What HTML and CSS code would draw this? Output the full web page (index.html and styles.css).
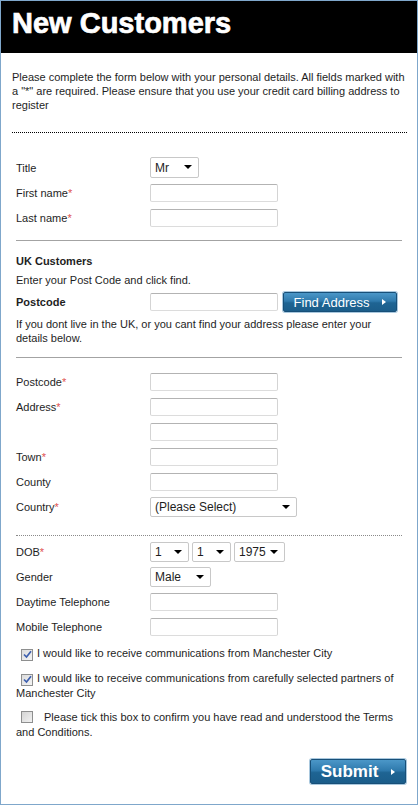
FILE: index.html
```html
<!DOCTYPE html>
<html lang="en">
<head>
<meta charset="utf-8">
<title>New Customers</title>
<link rel="stylesheet" href="styles.css">
</head>
<body>
<div class="panel">
  <header class="hd"><h1>New Customers</h1></header>
  <p class="intro">Please complete the form below with your personal details. All fields marked with a "*" are required. Please ensure that you use your credit card billing address to register</p>
  <hr class="dots">
  <form class="form" onsubmit="return false">
    <div class="rows rows-name">
      <div class="row"><label>Title</label><span class="sel w-title"><select><option>Mr</option><option>Mrs</option><option>Miss</option><option>Ms</option></select></span></div>
      <div class="row"><label>First name<span class="req">*</span></label><input class="txt" type="text"></div>
      <div class="row"><label>Last name<span class="req">*</span></label><input class="txt" type="text"></div>
    </div>
    <hr class="solid">
    <div class="uk">
      <h2>UK Customers</h2>
      <p class="note">Enter your Post Code and click find.</p>
      <div class="pc-row"><label class="bold">Postcode</label><input class="txt" type="text"><button type="button" class="btn btn-find">Find Address<i class="tri"></i></button></div>
      <p class="note note-2">If you dont live in the UK, or you cant find your address please enter your details below.</p>
    </div>
    <hr class="solid solid-2">
    <div class="rows rows-addr">
      <div class="row"><label>Postcode<span class="req">*</span></label><input class="txt" type="text"></div>
      <div class="row"><label>Address<span class="req">*</span></label><input class="txt" type="text"></div>
      <div class="row"><label></label><input class="txt" type="text"></div>
      <div class="row"><label>Town<span class="req">*</span></label><input class="txt" type="text"></div>
      <div class="row"><label>County</label><input class="txt" type="text"></div>
      <div class="row"><label>Country<span class="req">*</span></label><span class="sel w-country"><select><option>(Please Select)</option><option>United Kingdom</option></select></span></div>
    </div>
    <hr class="dots dots-light">
    <div class="rows rows-dob">
      <div class="row"><label>DOB<span class="req">*</span></label>
        <div class="dob">
          <span class="sel w-day"><select><option>1</option></select></span>
          <span class="sel w-day"><select><option>1</option></select></span>
          <span class="sel w-year"><select><option>1975</option></select></span>
        </div>
      </div>
      <div class="row"><label>Gender</label><span class="sel w-gender"><select><option>Male</option><option>Female</option></select></span></div>
      <div class="row"><label>Daytime Telephone</label><input class="txt" type="text"></div>
      <div class="row"><label>Mobile Telephone</label><input class="txt" type="text"></div>
    </div>
    <p class="cb cb-1"><span class="box"><svg viewBox="0 0 9 9" width="9" height="9"><path d="M1 4.5 L3.5 7 L8 1.2" fill="none" stroke="#3d5fae" stroke-width="1.7"/></svg></span>I would like to receive communications from Manchester City</p>
    <p class="cb cb-2"><span class="box"><svg viewBox="0 0 9 9" width="9" height="9"><path d="M1 4.5 L3.5 7 L8 1.2" fill="none" stroke="#3d5fae" stroke-width="1.7"/></svg></span>I would like to receive communications from carefully selected partners of Manchester City</p>
    <p class="cb cb-3"><span class="box box-off"></span><span class="sp"></span>Please tick this box to confirm you have read and understood the Terms and Conditions.</p>
    <div class="actions"><button type="submit" class="btn btn-submit">Submit<i class="tri"></i></button></div>
  </form>
</div>
</body>
</html>
```

FILE: styles.css
```css
* { box-sizing: border-box; }
html, body { margin: 0; padding: 0; background: #fff; }
body {
  font-family: "Liberation Sans", Arial, sans-serif;
  font-size: 11px;
  line-height: 14px;
  color: #1e1e1e;
}
.panel {
  width: 418px;
  height: 805px;
  border: 1px solid #7fa7cb;
  background: #fff;
}
.hd {
  background: #000;
  height: 52px;
  padding: 5px 0 0 11px;
}
.hd h1 {
  margin: 0;
  color: #fff;
  font-family: "Liberation Sans", Arial, sans-serif;
  font-weight: bold;
  font-size: 29px;
  line-height: 34px;
  -webkit-text-stroke: 0.7px #fff;
}
.intro {
  margin: 17px 8px 0 11px;
}
hr { border: 0; margin: 0; height: 0; }
.dots {
  border-top: 1px dotted #000;
  margin: 20px 10px 0 11px;
}
.dots-light {
  border-top-color: #8a8a8a;
  margin: 16px 15px 0 15px;
}
.solid {
  border-top: 1px solid #a3a3a3;
  margin: 10px 15px 0 15px;
}
.solid-2 { margin-top: 12px; }

.rows { padding-left: 15px; }
.rows-name { margin-top: 22px; }
.rows-addr { margin-top: 11px; }
.rows-dob { margin-top: 3px; }
.row {
  display: grid;
  grid-template-columns: 134px auto;
  align-items: center;
  justify-items: start;
  height: 25px;
}
.req { color: #e0524f; }

.txt {
  width: 128px;
  height: 18px;
  border: 1px solid;
  border-color: #b3b3b3 #d4d4d4 #dcdcdc #d4d4d4;
  border-radius: 2px;
  padding: 0 3px;
  font: 11px "Liberation Sans", Arial, sans-serif;
  background: #fff;
  margin: 0;
}
.sel {
  position: relative;
  display: inline-block;
  height: 20px;
}
.sel select {
  appearance: none;
  -webkit-appearance: none;
  width: 100%;
  height: 100%;
  border: 1px solid #c8c8c8;
  border-radius: 2px;
  background: #fff;
  font: 12px "Liberation Sans", Arial, sans-serif;
  color: #1e1e1e;
  padding: 0 0 0 4px;
  margin: 0;
}
.sel::after {
  content: "";
  position: absolute;
  right: 7px;
  top: 8px;
  border-left: 4px solid transparent;
  border-right: 4px solid transparent;
  border-top: 4px solid #000;
  pointer-events: none;
}
.w-title { width: 49px; height: 21px; }
.w-country { width: 147px; }
.w-day { width: 39px; }
.w-year { width: 51px; }
.w-gender { width: 61px; }
.dob { display: flex; gap: 3px; }

.uk { padding-left: 15px; }
.uk h2 {
  margin: 13px 0 0;
  font-size: 11px;
  line-height: 14px;
  font-weight: bold;
}
.note { margin: 5px 0 0; }
.note-2 { margin-top: 4px; padding-right: 20px; }
.pc-row {
  display: grid;
  grid-template-columns: 134px 128px auto;
  align-items: center;
  height: 22px;
  margin-top: 4px;
}
.bold { font-weight: bold; }

.btn {
  display: inline-flex;
  align-items: center;
  justify-content: center;
  color: #fff;
  border: 1px solid #174f78;
  border-radius: 2px;
  background: linear-gradient(#4b97c8 0%, #2f7aad 45%, #1e6493 55%, #1b5d8a 100%);
  box-shadow: 0 0 0 1px #a9c8de;
  font-family: "Liberation Sans", Arial, sans-serif;
  cursor: pointer;
  padding: 0;
}
.btn-find {
  width: 114px;
  height: 20px;
  margin-left: 5px;
  font-size: 13px;
  gap: 13px;
}
.btn-submit {
  width: 96px;
  height: 25px;
  font-size: 17px;
  font-weight: bold;
  gap: 13px;
}
.tri {
  display: inline-block;
  width: 0;
  height: 0;
  border-top: 3px solid transparent;
  border-bottom: 3px solid transparent;
  border-left: 4px solid #fff;
}

.cb {
  margin: 0;
  padding: 0 14px 0 15px;
  line-height: 15px;
}
.cb-1 { margin-top: 7px; }
.cb-2 { margin-top: 10px; }
.cb-3 { margin-top: 9px; }
.box {
  display: inline-flex;
  align-items: center;
  justify-content: center;
  width: 12px;
  height: 12px;
  margin: 0 4px 0 5px;
  vertical-align: -2px;
  border: 1px solid #8e8f8f;
  background: linear-gradient(135deg, #dcdcdc, #f4f4f4);
}
.box-off { background: linear-gradient(135deg, #d4d4d4, #f2f2f2); }
.sp { display: inline-block; width: 7px; }
.actions {
  display: flex;
  justify-content: flex-end;
  padding-right: 11px;
  margin-top: 19px;
}
```
